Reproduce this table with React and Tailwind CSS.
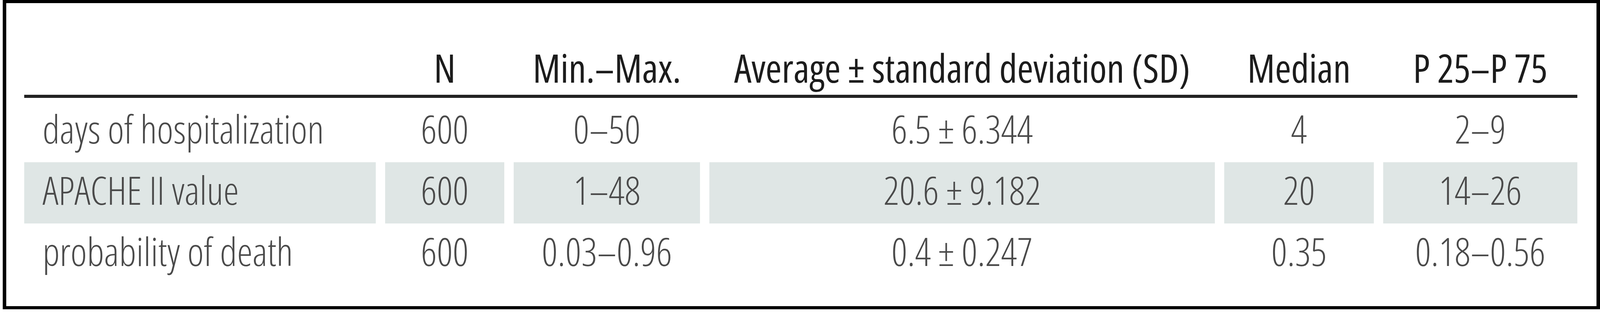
import React from 'react';

const columns = ['', 'N', 'Min.–Max.', 'Average ± standard deviation (SD)', 'Median', 'P 25–P 75'];

const rows = [
  { label: 'days of hospitalization', values: ['600', '0–50', '6.5 ± 6.344', '4', '2–9'], shaded: false },
  { label: 'APACHE II value', values: ['600', '1–48', '20.6 ± 9.182', '20', '14–26'], shaded: true },
  { label: 'probability of death', values: ['600', '0.03–0.96', '0.4 ± 0.247', '0.35', '0.18–0.56'], shaded: false },
];

// column widths taken from the shaded cells, as fractions of the table width
const grid =
  'grid grid-cols-[minmax(0,1271fr)_minmax(0,431fr)_minmax(0,674fr)_minmax(0,1827fr)_minmax(0,541fr)_minmax(0,702fr)] gap-x-[24px]';

export default function App() {
  return (
    <div className="w-full h-[800px] bg-white pl-[7px] font-['Open_Sans',sans-serif] font-stretch-[75%]">
      <div className="w-full h-[793px] border-y-8 border-x-[9px] border-black pl-[46px] pr-[49px]">
        <div className={grid}>
          {columns.map((c, i) => (
            <div
              key={i}
              className="h-[235px] flex items-end justify-center pb-[20px] text-[100px] leading-[100px] font-normal text-[#1c1c1c] whitespace-nowrap"
            >
              {c}
            </div>
          ))}
        </div>
        <div className="h-[8px] bg-[#222]" />
        <div className="mt-[8px]">
          {rows.map((r) => (
            <div key={r.label} className={grid}>
              <div
                className={`h-[157px] pl-[47px] text-[100px] leading-[140px] font-light text-[#4a4a4a] whitespace-nowrap ${r.shaded ? 'bg-[#dfe6e5]' : ''}`}
              >
                {r.label}
              </div>
              {r.values.map((v, i) => (
                <div
                  key={i}
                  className={`h-[157px] flex justify-center text-[100px] leading-[140px] font-light text-[#4a4a4a] whitespace-nowrap ${r.shaded ? 'bg-[#dfe6e5]' : ''}`}
                >
                  {v}
                </div>
              ))}
            </div>
          ))}
        </div>
      </div>
    </div>
  );
}
